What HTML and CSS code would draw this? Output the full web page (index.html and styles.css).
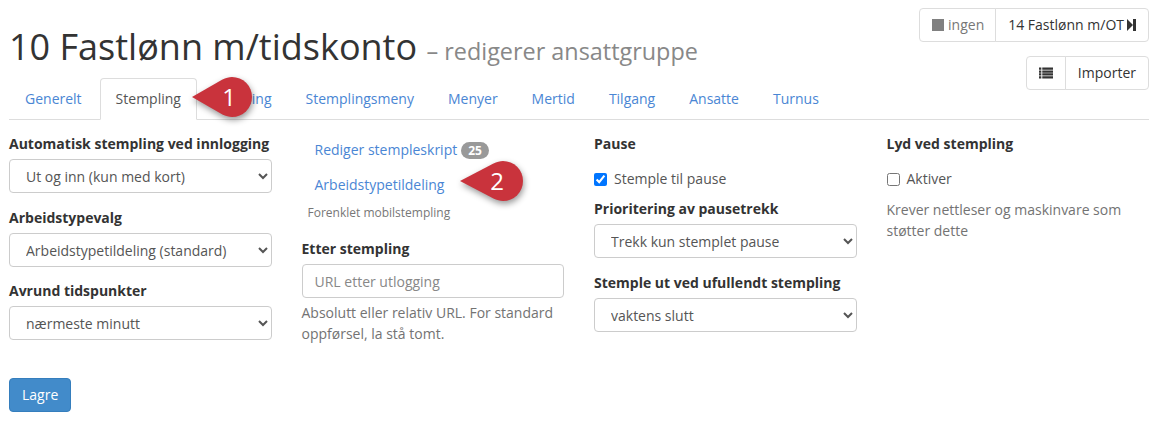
FILE: index.html
```html
<!DOCTYPE html>
<html lang="en">
<head>
    <meta charset="UTF-8">
    <meta name="viewport" content="width=device-width, initial-scale=1.0">
    <title>10 Fastlønn m/tidskonto</title>
    <link rel="stylesheet" href="styles.css">
</head>
<body>
    <div class="page-header">
        <h1 class="page-title">10 Fastlønn m/tidskonto <small>– redigerer ansattgruppe</small></h1>
        <div class="top-actions">
            <div class="btn-group">
                <a class="btn btn-muted"><span class="square"></span>ingen</a>
                <a class="btn btn-next">14 Fastlønn m/OT<svg width="9" height="12" viewBox="0 0 9 12"><path d="M0 0 L6 6 L0 12 Z" fill="#333"/><rect x="6" y="0" width="3" height="12" fill="#333"/></svg></a>
            </div>
            <div class="btn-group">
                <a class="btn btn-icon"><svg width="15" height="12" viewBox="0 0 15 12"><path d="M0 0h2.5v2.4H0zM3.5 0H15v2.4H3.5zM0 3.2h2.5v2.4H0zM3.5 3.2H15v2.4H3.5zM0 6.4h2.5v2.4H0zM3.5 6.4H15v2.4H3.5zM0 9.6h2.5V12H0zM3.5 9.6H15V12H3.5z" fill="#333"/></svg></a>
                <a class="btn">Importer</a>
            </div>
        </div>
    </div>

    <ul class="tabs">
        <li><a>Generelt</a></li>
        <li class="active"><a>Stempling</a></li>
        <li><a>Planning</a></li>
        <li><a>Stemplingsmeny</a></li>
        <li><a>Menyer</a></li>
        <li><a>Mertid</a></li>
        <li><a>Tilgang</a></li>
        <li><a>Ansatte</a></li>
        <li><a>Turnus</a></li>
    </ul>

    <form class="columns">
        <div class="col">
            <div class="field">
                <label>Automatisk stempling ved innlogging</label>
                <select><option>Ut og inn (kun med kort)</option></select>
            </div>
            <div class="field">
                <label>Arbeidstypevalg</label>
                <select><option>Arbeidstypetildeling (standard)</option></select>
            </div>
            <div class="field">
                <label>Avrund tidspunkter</label>
                <select><option>nærmeste minutt</option></select>
            </div>
        </div>
        <div class="col col-links">
            <div class="link-row">
                <a>Rediger stempleskript</a> <span class="badge">25</span>
            </div>
            <div class="link-row">
                <a>Arbeidstypetildeling</a>
            </div>
            <div class="small-note">Forenklet mobilstempling</div>
            <div class="field">
                <label>Etter stempling</label>
                <input type="text" placeholder="URL etter utlogging">
                <p class="help">Absolutt eller relativ URL. For standard oppførsel, la stå tomt.</p>
            </div>
        </div>
        <div class="col">
            <div class="heading">Pause</div>
            <label class="check"><input type="checkbox" checked> Stemple til pause</label>
            <div class="field">
                <label>Prioritering av pausetrekk</label>
                <select><option>Trekk kun stemplet pause</option></select>
            </div>
            <div class="field">
                <label>Stemple ut ved ufullendt stempling</label>
                <select><option>vaktens slutt</option></select>
            </div>
        </div>
        <div class="col">
            <div class="heading">Lyd ved stempling</div>
            <label class="check"><input type="checkbox"> Aktiver</label>
            <p class="help help-sound">Krever nettleser og maskinvare som støtter dette</p>
        </div>
    </form>

    <button class="save" type="button">Lagre</button>

    <div class="callout callout-one">
        <svg width="66" height="48" viewBox="0 0 66 48"><path d="M2 22 L32 4.7 C36 2.8 39 2 42 2 A20 20 0 0 1 42 42 C39 42 36 41.2 32 39.3 Z" fill="#c9333c"/></svg>
        <span>1</span>
    </div>
    <div class="callout callout-two">
        <svg width="69" height="48" viewBox="0 0 69 48"><path d="M2 22 L35 4.7 C39 2.8 42 2 45 2 A20 20 0 0 1 45 42 C42 42 39 41.2 35 39.3 Z" fill="#c9333c"/></svg>
        <span>2</span>
    </div>
</body>
</html>
```

FILE: styles.css
```css
* {
    box-sizing: border-box;
}
body {
    font-family: "Open Sans", sans-serif;
    font-size: 14px;
    line-height: 20px;
    color: #555;
    margin: 0;
    padding: 0 7px 0 9px;
    background-color: #fff;
    position: relative;
    height: 431px;
    overflow: hidden;
}
.page-header {
    display: flex;
    justify-content: space-between;
    height: 78px;
}
.top-actions {
    display: flex;
    flex-direction: column;
    align-items: flex-end;
    gap: 14px;
    padding-top: 8px;
}
.btn-group {
    display: flex;
}
.btn {
    display: flex;
    align-items: center;
    gap: 3px;
    height: 34px;
    padding: 0 12px;
    border: 1px solid #ddd;
    color: #333;
    background-color: #fff;
}
.btn + .btn {
    margin-left: -1px;
}
.btn:first-child {
    border-radius: 4px 0 0 4px;
}
.btn:last-child {
    border-radius: 0 4px 4px 0;
}
.btn-muted {
    color: #777;
    gap: 4px;
    padding-right: 11px;
}
.btn-icon {
    width: 40px;
}
.square {
    width: 12px;
    height: 12px;
    background-color: #808080;
}
.page-title {
    margin: 0;
    padding-top: 24px;
    font-size: 36px;
    line-height: 46px;
    font-weight: 400;
    color: #333;
}
.page-title small {
    font-size: 23.4px;
    color: #888;
}
.tabs {
    list-style: none;
    margin: 0;
    padding: 0;
    display: flex;
    height: 42px;
    border-bottom: 1px solid #ddd;
}
.tabs li {
    margin-right: 2px;
}
.tabs a {
    display: block;
    height: 42px;
    padding: 10px 15px;
    color: #4a86d4;
    border: 1px solid transparent;
    border-radius: 4px 4px 0 0;
}
.tabs .active a {
    color: #555;
    background-color: #fff;
    border-color: #ddd #ddd #fff;
}
.columns {
    display: grid;
    grid-template-columns: repeat(4, 1fr);
    column-gap: 30px;
    padding-top: 14px;
}
.field {
    margin-bottom: 14.5px;
}
.field label, .heading {
    display: block;
    font-weight: 700;
    color: #333;
    margin-bottom: 5px;
}
.heading {
    margin-bottom: 15px;
}
select, input[type="text"] {
    display: block;
    width: 100%;
    height: 34px;
    padding: 6px 12px;
    font-family: inherit;
    font-size: 14px;
    color: #555;
    background-color: #fff;
    border: 1px solid #ccc;
    border-radius: 4px;
}
input[type="text"]::placeholder {
    color: #888;
}
.help {
    margin: 4px 0 0;
    color: #737373;
    line-height: 21px;
}
.help-sound {
    margin-top: 1px;
}
.col-links {
    padding-top: 6px;
}
.link-row {
    padding: 0 13px;
    height: 35px;
    display: flex;
    gap: 4px;
    align-items: flex-start;
}
.link-row a {
    color: #4a86d4;
}
.badge {
    margin-top: 2px;
    padding: 0 7px;
    height: 17px;
    line-height: 17px;
    font-size: 12px;
    font-weight: 700;
    color: #fff;
    background-color: #999;
    border-radius: 10px;
}
.small-note {
    padding-left: 6px;
    font-size: 12px;
    color: #777;
    margin-top: -7px;
    margin-bottom: 16px;
}
.check {
    display: flex;
    align-items: center;
    gap: 7px;
    margin-bottom: 10px;
    color: #555;
}
.check input {
    margin: 0;
    width: 13px;
    height: 13px;
}
.save {
    display: block;
    margin-top: 19px;
    height: 34px;
    padding: 0 12px;
    font-family: inherit;
    font-size: 14px;
    color: #fff;
    background-color: #428bca;
    border: 1px solid #357ebd;
    border-radius: 4px;
}
.callout {
    position: absolute;
}
.callout svg {
    display: block;
    filter: drop-shadow(1px 3px 3px rgba(0, 0, 0, 0.4));
}
.callout span {
    position: absolute;
    left: 22px;
    top: 4px;
    width: 34px;
    text-align: center;
    font-size: 24px;
    line-height: 36px;
    color: #fff;
}
.callout-one {
    left: 190px;
    top: 75px;
}
.callout-two {
    left: 458px;
    top: 159px;
}
```
